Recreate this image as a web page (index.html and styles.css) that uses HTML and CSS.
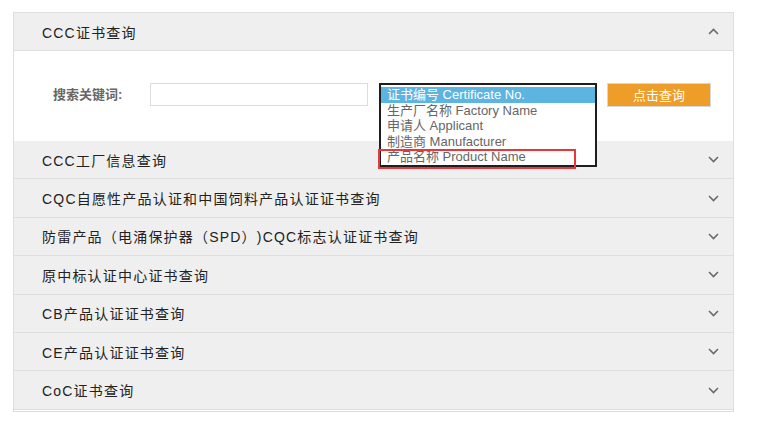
FILE: index.html
```html
<!DOCTYPE html>
<html lang="zh-CN">
<head>
<meta charset="utf-8">
<link rel="stylesheet" href="styles.css">
</head>
<body>
<div class="panel">
  <div class="item open">
    <div class="head"><span class="title">CCC证书查询</span><svg class="chev" width="11" height="7" viewBox="0 0 11 7"><polyline points="1,6 5.5,1.5 10,6" fill="none" stroke="#6a6a6a" stroke-width="1.6"/></svg></div>
    <div class="body">
      <span class="label">搜索关键词:</span>
      <input class="kw" type="text">
      <div class="listbox">
        <div class="opt sel">证书编号 Certificate No.</div>
        <div class="opt">生产厂名称 Factory Name</div>
        <div class="opt">申请人 Applicant</div>
        <div class="opt">制造商 Manufacturer</div>
        <div class="opt">产品名称 Product Name</div>
        <div class="mark"></div>
      </div>
      <button class="btn">点击查询</button>
    </div>
  </div>
  <div class="item"><div class="head"><span class="title">CCC工厂信息查询</span><svg class="chev" width="11" height="7" viewBox="0 0 11 7"><polyline points="1,1 5.5,5.5 10,1" fill="none" stroke="#6a6a6a" stroke-width="1.6"/></svg></div></div>
  <div class="item"><div class="head"><span class="title">CQC自愿性产品认证和中国饲料产品认证证书查询</span><svg class="chev" width="11" height="7" viewBox="0 0 11 7"><polyline points="1,1 5.5,5.5 10,1" fill="none" stroke="#6a6a6a" stroke-width="1.6"/></svg></div></div>
  <div class="item"><div class="head"><span class="title">防雷产品（电涌保护器（SPD）)CQC标志认证证书查询</span><svg class="chev" width="11" height="7" viewBox="0 0 11 7"><polyline points="1,1 5.5,5.5 10,1" fill="none" stroke="#6a6a6a" stroke-width="1.6"/></svg></div></div>
  <div class="item"><div class="head"><span class="title">原中标认证中心证书查询</span><svg class="chev" width="11" height="7" viewBox="0 0 11 7"><polyline points="1,1 5.5,5.5 10,1" fill="none" stroke="#6a6a6a" stroke-width="1.6"/></svg></div></div>
  <div class="item"><div class="head"><span class="title">CB产品认证证书查询</span><svg class="chev" width="11" height="7" viewBox="0 0 11 7"><polyline points="1,1 5.5,5.5 10,1" fill="none" stroke="#6a6a6a" stroke-width="1.6"/></svg></div></div>
  <div class="item"><div class="head"><span class="title">CE产品认证证书查询</span><svg class="chev" width="11" height="7" viewBox="0 0 11 7"><polyline points="1,1 5.5,5.5 10,1" fill="none" stroke="#6a6a6a" stroke-width="1.6"/></svg></div></div>
  <div class="item"><div class="head"><span class="title">CoC证书查询</span><svg class="chev" width="11" height="7" viewBox="0 0 11 7"><polyline points="1,1 5.5,5.5 10,1" fill="none" stroke="#6a6a6a" stroke-width="1.6"/></svg></div></div>
</div>
</body>
</html>
```

FILE: styles.css
```css
* { box-sizing: border-box; }
html, body { margin: 0; padding: 0; background: #fff; }
body {
  padding: 12px 0 0 13px;
  font-family: "Liberation Sans", "Noto Sans CJK SC", sans-serif;
  text-spacing-trim: space-all;
}
.panel {
  width: 721px;
  border: 1px solid #dedede;
  padding-bottom: 1px;
  background: #fff;
}
.item { border-bottom: 1px solid #dedede; }
.head {
  height: 37.4px;
  background: #efefef;
  display: flex;
  align-items: center;
  justify-content: space-between;
  padding: 0 14px 0 28px;
}
.open .head { height: 38px; border-bottom: 1px solid #dedede; }
.open { border-bottom: none; }
.title {
  font-size: 14px;
  color: #222;
  letter-spacing: 1.2px;
}
.chev { display: block; margin-right: 0; }
.body {
  height: 90px;
  background: #fff;
  display: flex;
  align-items: flex-start;
  padding: 32px 0 0 39px;
}
.label {
  font-size: 13px;
  font-weight: bold;
  color: #666;
  width: 97px;
  line-height: 23px;
}
.kw {
  width: 218px;
  height: 23px;
  border: 1px solid #dcdcdc;
  margin: 0;
  padding: 0;
}
.listbox {
  position: relative;
  margin-left: 11px;
  width: 218px;
  height: 84px;
  border: 2px solid #1e1e1e;
  padding: 2px 0 0 0;
  background: #fff;
}
.opt {
  height: 15.6px;
  line-height: 15.6px;
  font-size: 13px;
  color: #666;
  padding-left: 6px;
  white-space: nowrap;
}
.opt.sel { background: #5cb4e1; color: #fff; }
.mark {
  position: absolute;
  left: -3px;
  top: 64px;
  width: 198px;
  height: 20px;
  border: 2px solid #e8363a;
}
.btn {
  margin-left: 10px;
  width: 104px;
  height: 24px;
  background: #ee9d28;
  border: 1px solid #d6d6d6;
  color: #fff;
  font-family: "Noto Sans CJK SC", sans-serif;
  font-size: 13px;
  padding: 0;
  line-height: 20px;
}
```
